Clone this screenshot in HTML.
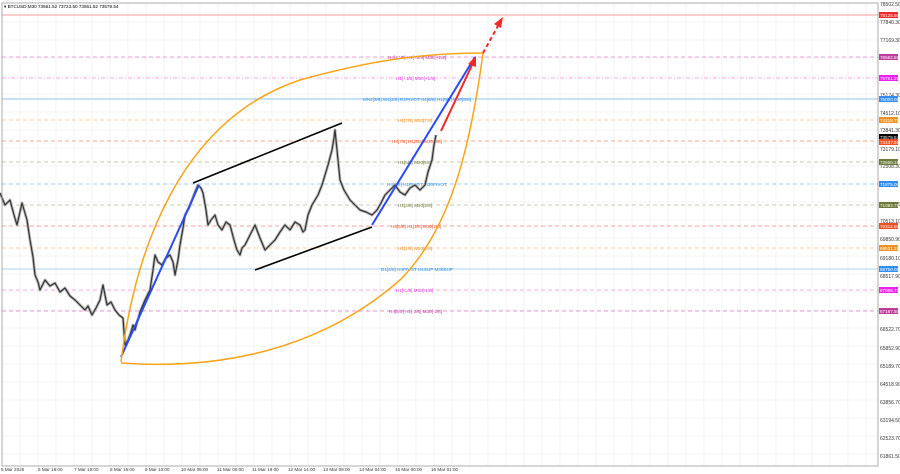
<!DOCTYPE html>
<html><head><meta charset="utf-8"><style>
html,body{margin:0;padding:0;background:#fff;}
svg{display:block;font-family:"Liberation Sans",sans-serif;}
</style></head><body>
<svg width="900" height="474" viewBox="0 0 900 474" xmlns="http://www.w3.org/2000/svg">
<rect width="900" height="474" fill="#fff"/>
<g stroke="#ececec" stroke-width="0.6">
<line x1="20" y1="3" x2="20" y2="466"/><line x1="38" y1="3" x2="38" y2="466"/><line x1="56" y1="3" x2="56" y2="466"/><line x1="74" y1="3" x2="74" y2="466"/><line x1="92" y1="3" x2="92" y2="466"/><line x1="110" y1="3" x2="110" y2="466"/><line x1="128" y1="3" x2="128" y2="466"/><line x1="146" y1="3" x2="146" y2="466"/><line x1="164" y1="3" x2="164" y2="466"/><line x1="182" y1="3" x2="182" y2="466"/><line x1="200" y1="3" x2="200" y2="466"/><line x1="218" y1="3" x2="218" y2="466"/><line x1="236" y1="3" x2="236" y2="466"/><line x1="254" y1="3" x2="254" y2="466"/><line x1="272" y1="3" x2="272" y2="466"/><line x1="290" y1="3" x2="290" y2="466"/><line x1="308" y1="3" x2="308" y2="466"/><line x1="326" y1="3" x2="326" y2="466"/><line x1="344" y1="3" x2="344" y2="466"/><line x1="362" y1="3" x2="362" y2="466"/><line x1="380" y1="3" x2="380" y2="466"/><line x1="398" y1="3" x2="398" y2="466"/><line x1="416" y1="3" x2="416" y2="466"/><line x1="434" y1="3" x2="434" y2="466"/><line x1="452" y1="3" x2="452" y2="466"/><line x1="470" y1="3" x2="470" y2="466"/><line x1="488" y1="3" x2="488" y2="466"/><line x1="506" y1="3" x2="506" y2="466"/><line x1="524" y1="3" x2="524" y2="466"/><line x1="542" y1="3" x2="542" y2="466"/><line x1="560" y1="3" x2="560" y2="466"/><line x1="578" y1="3" x2="578" y2="466"/><line x1="596" y1="3" x2="596" y2="466"/><line x1="614" y1="3" x2="614" y2="466"/><line x1="632" y1="3" x2="632" y2="466"/><line x1="650" y1="3" x2="650" y2="466"/><line x1="668" y1="3" x2="668" y2="466"/><line x1="686" y1="3" x2="686" y2="466"/><line x1="704" y1="3" x2="704" y2="466"/><line x1="722" y1="3" x2="722" y2="466"/><line x1="740" y1="3" x2="740" y2="466"/><line x1="758" y1="3" x2="758" y2="466"/><line x1="776" y1="3" x2="776" y2="466"/><line x1="794" y1="3" x2="794" y2="466"/><line x1="812" y1="3" x2="812" y2="466"/><line x1="830" y1="3" x2="830" y2="466"/><line x1="848" y1="3" x2="848" y2="466"/><line x1="866" y1="3" x2="866" y2="466"/>
<line x1="2" y1="22" x2="878" y2="22"/><line x1="2" y1="40" x2="878" y2="40"/><line x1="2" y1="58" x2="878" y2="58"/><line x1="2" y1="76" x2="878" y2="76"/><line x1="2" y1="94" x2="878" y2="94"/><line x1="2" y1="112" x2="878" y2="112"/><line x1="2" y1="130" x2="878" y2="130"/><line x1="2" y1="148" x2="878" y2="148"/><line x1="2" y1="166" x2="878" y2="166"/><line x1="2" y1="184" x2="878" y2="184"/><line x1="2" y1="202" x2="878" y2="202"/><line x1="2" y1="220" x2="878" y2="220"/><line x1="2" y1="238" x2="878" y2="238"/><line x1="2" y1="256" x2="878" y2="256"/><line x1="2" y1="274" x2="878" y2="274"/><line x1="2" y1="292" x2="878" y2="292"/><line x1="2" y1="310" x2="878" y2="310"/><line x1="2" y1="328" x2="878" y2="328"/><line x1="2" y1="346" x2="878" y2="346"/><line x1="2" y1="364" x2="878" y2="364"/><line x1="2" y1="382" x2="878" y2="382"/><line x1="2" y1="400" x2="878" y2="400"/><line x1="2" y1="418" x2="878" y2="418"/><line x1="2" y1="436" x2="878" y2="436"/><line x1="2" y1="454" x2="878" y2="454"/>
</g>
<g stroke-width="1" fill="none">
<line x1="2" y1="15" x2="878" y2="15" stroke="#ff9a9a"/>
<line x1="2" y1="57" x2="878" y2="57" stroke="#f2a0dc" stroke-dasharray="4,3"/>
<line x1="2" y1="78" x2="878" y2="78" stroke="#f6a8f0" stroke-dasharray="4,2,1,2"/>
<line x1="2" y1="99" x2="878" y2="99" stroke="#8ec2f2"/>
<line x1="2" y1="120" x2="878" y2="120" stroke="#fcd0a0" stroke-dasharray="4,3"/>
<line x1="2" y1="141" x2="878" y2="141" stroke="#f8a890" stroke-dasharray="4,3"/>
<line x1="2" y1="162" x2="878" y2="162" stroke="#c8c8a8" stroke-dasharray="4,3"/>
<line x1="2" y1="184" x2="878" y2="184" stroke="#a8d0f4" stroke-dasharray="4,3"/>
<line x1="2" y1="205" x2="878" y2="205" stroke="#c8c8b0" stroke-dasharray="4,3"/>
<line x1="2" y1="226" x2="878" y2="226" stroke="#f8a0a0" stroke-dasharray="4,3"/>
<line x1="2" y1="248" x2="878" y2="248" stroke="#fcd0a0" stroke-dasharray="4,3"/>
<line x1="2" y1="269" x2="878" y2="269" stroke="#a8d0f4"/>
<line x1="2" y1="290" x2="878" y2="290" stroke="#f4a8ec" stroke-dasharray="4,3"/>
<line x1="2" y1="311" x2="878" y2="311" stroke="#e89ad0" stroke-dasharray="4,3"/>
</g>
<g font-size="4.6">
<text x="388" y="59" fill="#c03c9c">H4[+1/8] H1[+2/8] M30[+2/8]</text>
<text x="396" y="80" fill="#e040e0">H1[+1/8] M30[+1/8]</text>
<text x="363" y="101" fill="#2f8ef0">MN1[3/8] W1[2/8] D1PIVOT H4[8/8] H1[8/8] M30[8/8]</text>
<text x="398" y="122" fill="#f09020">H1[7/8] M30[7/8]</text>
<text x="392" y="143" fill="#f05020">H4[7/8] H1[6/8] M30[6/8]</text>
<text x="398" y="164" fill="#6b7a3a">H1[5/8] M30[5/8]</text>
<text x="387" y="186" fill="#2f8ef0">H4[6/8] H1PIVOT M30PIVOT</text>
<text x="398" y="207" fill="#6b7a3a">H1[3/8] M30[3/8]</text>
<text x="391" y="228" fill="#f05020">H4[5/8] H1[2/8] M30[2/8]</text>
<text x="398" y="250" fill="#f09020">H1[1/8] M30[1/8]</text>
<text x="381" y="271" fill="#2f8ef0">D1[4/8] H4PIVOT H1SUP M30SUP</text>
<text x="396" y="292" fill="#e040e0">H1[-1/8] M30[-1/8]</text>
<text x="389" y="313" fill="#c03c9c">H4[5/8] H1[-2/8] M30[-2/8]</text>
</g>
<polyline id="pl" fill="none" stroke="#bbb" stroke-width="3" stroke-linejoin="round" points="0,193 5,205 10,200 14,215 17,225 22,203 27,220 30,240 33,257 35,275 38,282 40,290 43,284 45,280 50,286 55,283 60,292 65,288 70,296 75,300 80,305 85,310 88,306 92,315 96,308 100,300 103,285 107,305 111,302 115,310 119,315 123,318 125,345 128,340 130,335 133,325 135,330 140,312 145,300 150,290 153,270 155,255 158,262 162,265 166,258 170,255 173,262 175,275 178,260 180,245 183,228 185,215 189,208 192,200 195,192 198,185 201,188 203,193 206,210 208,225 211,220 215,215 218,225 222,230 226,222 230,225 234,240 237,250 240,255 242,248 245,245 250,235 255,225 260,238 265,250 270,245 275,240 280,232 285,225 290,230 295,222 300,225 303,232 305,230 308,215 312,205 315,200 318,195 322,185 325,175 328,165 332,150 334,138 335,130 338,160 340,180 344,190 350,200 355,205 360,210 366,212 372,215 377,210 381,203 385,195 390,190 395,185 400,192 405,195 410,188 415,185 420,190 425,185 428,172 432,160 434,145 435,140 436,135"/>
<polyline fill="none" stroke="#333" stroke-width="1.2" stroke-linejoin="round" points="0,193 5,205 10,200 14,215 17,225 22,203 27,220 30,240 33,257 35,275 38,282 40,290 43,284 45,280 50,286 55,283 60,292 65,288 70,296 75,300 80,305 85,310 88,306 92,315 96,308 100,300 103,285 107,305 111,302 115,310 119,315 123,318 125,345 128,340 130,335 133,325 135,330 140,312 145,300 150,290 153,270 155,255 158,262 162,265 166,258 170,255 173,262 175,275 178,260 180,245 183,228 185,215 189,208 192,200 195,192 198,185 201,188 203,193 206,210 208,225 211,220 215,215 218,225 222,230 226,222 230,225 234,240 237,250 240,255 242,248 245,245 250,235 255,225 260,238 265,250 270,245 275,240 280,232 285,225 290,230 295,222 300,225 303,232 305,230 308,215 312,205 315,200 318,195 322,185 325,175 328,165 332,150 334,138 335,130 338,160 340,180 344,190 350,200 355,205 360,210 366,212 372,215 377,210 381,203 385,195 390,190 395,185 400,192 405,195 410,188 415,185 420,190 425,185 428,172 432,160 434,145 435,140 436,135"/>
<line x1="193" y1="183" x2="342" y2="123" stroke="#000" stroke-width="1.6"/>
<line x1="255" y1="270" x2="372" y2="227" stroke="#000" stroke-width="1.6"/>
<line x1="121" y1="357" x2="199" y2="185" stroke="#2a4cf0" stroke-width="2"/>
<line x1="372" y1="225" x2="475" y2="57" stroke="#2a4cf0" stroke-width="2"/>
<path d="M121,362 C135,250 180,120 300,80 C380,58 430,53 483,53" fill="none" stroke="#f8a418" stroke-width="1.5"/>
<path d="M121,363 C220,370 320,350 400,280 C450,230 470,150 483,53" fill="none" stroke="#f8a418" stroke-width="1.5"/>
<line x1="441" y1="131" x2="473" y2="63" stroke="#f02828" stroke-width="2"/>
<polygon points="476,56 468,64 476,67" fill="#f02828"/>
<line x1="483" y1="53" x2="499" y2="24" stroke="#f02828" stroke-width="2" stroke-dasharray="4,3"/>
<polygon points="503,17 494,24 501,28" fill="#f02828"/>
<rect x="2" y="3" width="876" height="463" fill="none" stroke="#999" stroke-width="0.8"/>
<text x="4" y="8" font-size="4.6" fill="#000">▾ BTCUSD,M30  73561.52 73723.50 73561.52 73579.54</text>
<g font-size="5" fill="#333">
<text x="880" y="6">78502.50</text><text x="880" y="24">77840.30</text><text x="880" y="42">77169.30</text><text x="880" y="97">75174.30</text><text x="880" y="115">74512.10</text><text x="880" y="132">73841.30</text><text x="880" y="151">73179.10</text><text x="880" y="168">72508.30</text><text x="880" y="206">71125.30</text><text x="880" y="223">70513.10</text><text x="880" y="241">69850.90</text><text x="880" y="260">69180.10</text><text x="880" y="278">68517.90</text><text x="880" y="331">66522.70</text><text x="880" y="350">65852.90</text><text x="880" y="368">65189.70</text><text x="880" y="386">64518.90</text><text x="880" y="404">63856.70</text><text x="880" y="422">63194.50</text><text x="880" y="440">62523.70</text><text x="880" y="458">61861.50</text>
</g>
<g font-size="4.6" fill="#fff">
<rect x="879" y="12" width="19" height="6" fill="#f02828"/><text x="880" y="17">78125.50</text>
<rect x="879" y="54" width="19" height="6" fill="#c03c9c"/><text x="880" y="59">76562.50</text>
<rect x="879" y="75" width="19" height="6" fill="#f020f0"/><text x="880" y="80">75781.25</text>
<rect x="879" y="96" width="19" height="6" fill="#2f8ef0"/><text x="880" y="101">75000.00</text>
<rect x="879" y="117" width="19" height="6" fill="#f09020"/><text x="880" y="122">74218.75</text>
<rect x="879" y="134" width="19" height="6" fill="#000"/><text x="880" y="139">73579.54</text>
<rect x="879" y="139" width="19" height="6" fill="#f05020"/><text x="880" y="144">73437.50</text>
<rect x="879" y="159" width="19" height="6" fill="#6b7a3a"/><text x="880" y="164">72656.25</text>
<rect x="879" y="181" width="19" height="6" fill="#2f8ef0"/><text x="880" y="186">71875.00</text>
<rect x="879" y="202" width="19" height="6" fill="#6b7a3a"/><text x="880" y="207">71093.75</text>
<rect x="879" y="223" width="19" height="6" fill="#f05020"/><text x="880" y="228">70312.50</text>
<rect x="879" y="245" width="19" height="6" fill="#f09020"/><text x="880" y="250">69531.25</text>
<rect x="879" y="266" width="19" height="6" fill="#2f8ef0"/><text x="880" y="271">68750.00</text>
<rect x="879" y="287" width="19" height="6" fill="#f020f0"/><text x="880" y="292">67968.75</text>
<rect x="879" y="308" width="19" height="6" fill="#c03c9c"/><text x="880" y="313">67187.50</text>
</g>
<g font-size="4.6" fill="#333">
<text x="1" y="471">5 Mar 2026</text><text x="38" y="471">6 Mar 18:00</text><text x="74" y="471">7 Mar 19:00</text><text x="110" y="471">8 Mar 15:00</text><text x="145" y="471">9 Mar 10:00</text><text x="181" y="471">10 Mar 05:00</text><text x="217" y="471">11 Mar 00:00</text><text x="252" y="471">11 Mar 19:00</text><text x="288" y="471">12 Mar 14:00</text><text x="323" y="471">13 Mar 09:00</text><text x="359" y="471">14 Mar 04:00</text><text x="395" y="471">15 Mar 00:00</text><text x="431" y="471">16 Mar 01:00</text>
</g>
</svg>
</body></html>
